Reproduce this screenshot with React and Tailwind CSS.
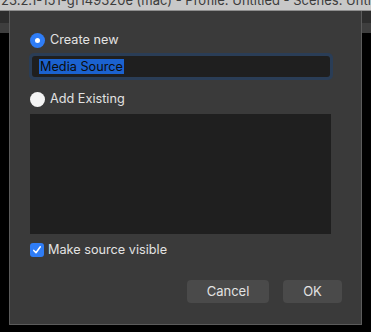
import React from 'react';

const Radio = ({ checked, label }) => (
  <div className="flex items-center h-[15px] gap-[5px]">
    {checked ? (
      <span className="w-[15px] h-[15px] rounded-full bg-[#2f7df6] flex items-center justify-center flex-shrink-0">
        <span className="w-[5px] h-[5px] rounded-full bg-white" />
      </span>
    ) : (
      <span className="w-[15px] h-[15px] rounded-full bg-[#f4f4f4] flex-shrink-0" />
    )}
    <span className="text-[12.7px] leading-none text-[#e2e2e2]">{label}</span>
  </div>
);

export default function App() {
  return (
    <div className="w-[371px] h-[332px] bg-black flex flex-col overflow-hidden font-['Inter',sans-serif]">
      {/* window title bar (cut off) */}
      <div className="h-[11px] bg-[#c8c8c8] border-b border-[#8e8e8e] overflow-hidden flex-shrink-0">
        <div className="-mt-[8px] pl-[1px] text-[13px] leading-[16px] text-[#3c3c3c] whitespace-nowrap">
          23.2.1-151-gf149320e (mac) - Profile: Untitled - Scenes: Untitled
        </div>
      </div>

      <div className="flex flex-1">
        {/* left backdrop */}
        <div className="w-[9px] flex flex-col flex-shrink-0">
          <div className="h-[12px] bg-[#2d2d2d]" />
          <div className="h-[10px] bg-[#3e3e3e]" />
        </div>

        {/* dialog */}
        <div className="w-[353px] h-[314px] bg-[#3a3a3a] border-x border-b border-[#5b5b5b] flex flex-col pl-[20px] pr-[19px] pt-[22px]">
          <Radio checked label="Create new" />

          <div className="mt-[5px] -ml-[1px] w-[304px] h-[27px] rounded-[5px] bg-[#2a3d56] p-[3px]">
            <div className="h-full rounded-[3px] bg-[#1f1f1f] flex items-center pl-[7px]">
              <span className="bg-[#1b62cf] text-[#0d0d0d] text-[12.7px] leading-[15px] px-[1px]">Media Source</span>
            </div>
          </div>

          <div className="mt-[12px]">
            <Radio label="Add Existing" />
          </div>

          <div className="mt-[7px] w-[301px] h-[120px] bg-[#1f1f1f]" />

          <div className="mt-[9px] flex items-center gap-[4px] h-[14px]">
            <span className="w-[14px] h-[14px] rounded-[3px] bg-[#2f7df6] flex items-center justify-center flex-shrink-0">
              <svg width="10" height="10" viewBox="0 0 10 10" fill="none">
                <path d="M1.8 5.4 L4 7.8 L8.3 1.8" stroke="white" strokeWidth="1.5" strokeLinecap="round" strokeLinejoin="round" />
              </svg>
            </span>
            <span className="text-[12.7px] leading-none text-[#e2e2e2]">Make source visible</span>
          </div>

          <div className="mt-[23px] flex justify-end gap-[14px] pr-[0px]">
            <button className="w-[82px] h-[23px] rounded-[4px] bg-[#4a4a4a] text-[13px] text-[#e2e2e2] flex items-center justify-center">
              Cancel
            </button>
            <button className="w-[59px] h-[23px] rounded-[4px] bg-[#4a4a4a] text-[13px] text-[#e2e2e2] flex items-center justify-center">
              OK
            </button>
          </div>
        </div>

        {/* right backdrop */}
        <div className="w-[9px] flex flex-col flex-shrink-0">
          <div className="h-[12px] bg-[#2d2d2d]" />
          <div className="h-[10px] bg-[#3e3e3e]" />
        </div>
      </div>
    </div>
  );
}
